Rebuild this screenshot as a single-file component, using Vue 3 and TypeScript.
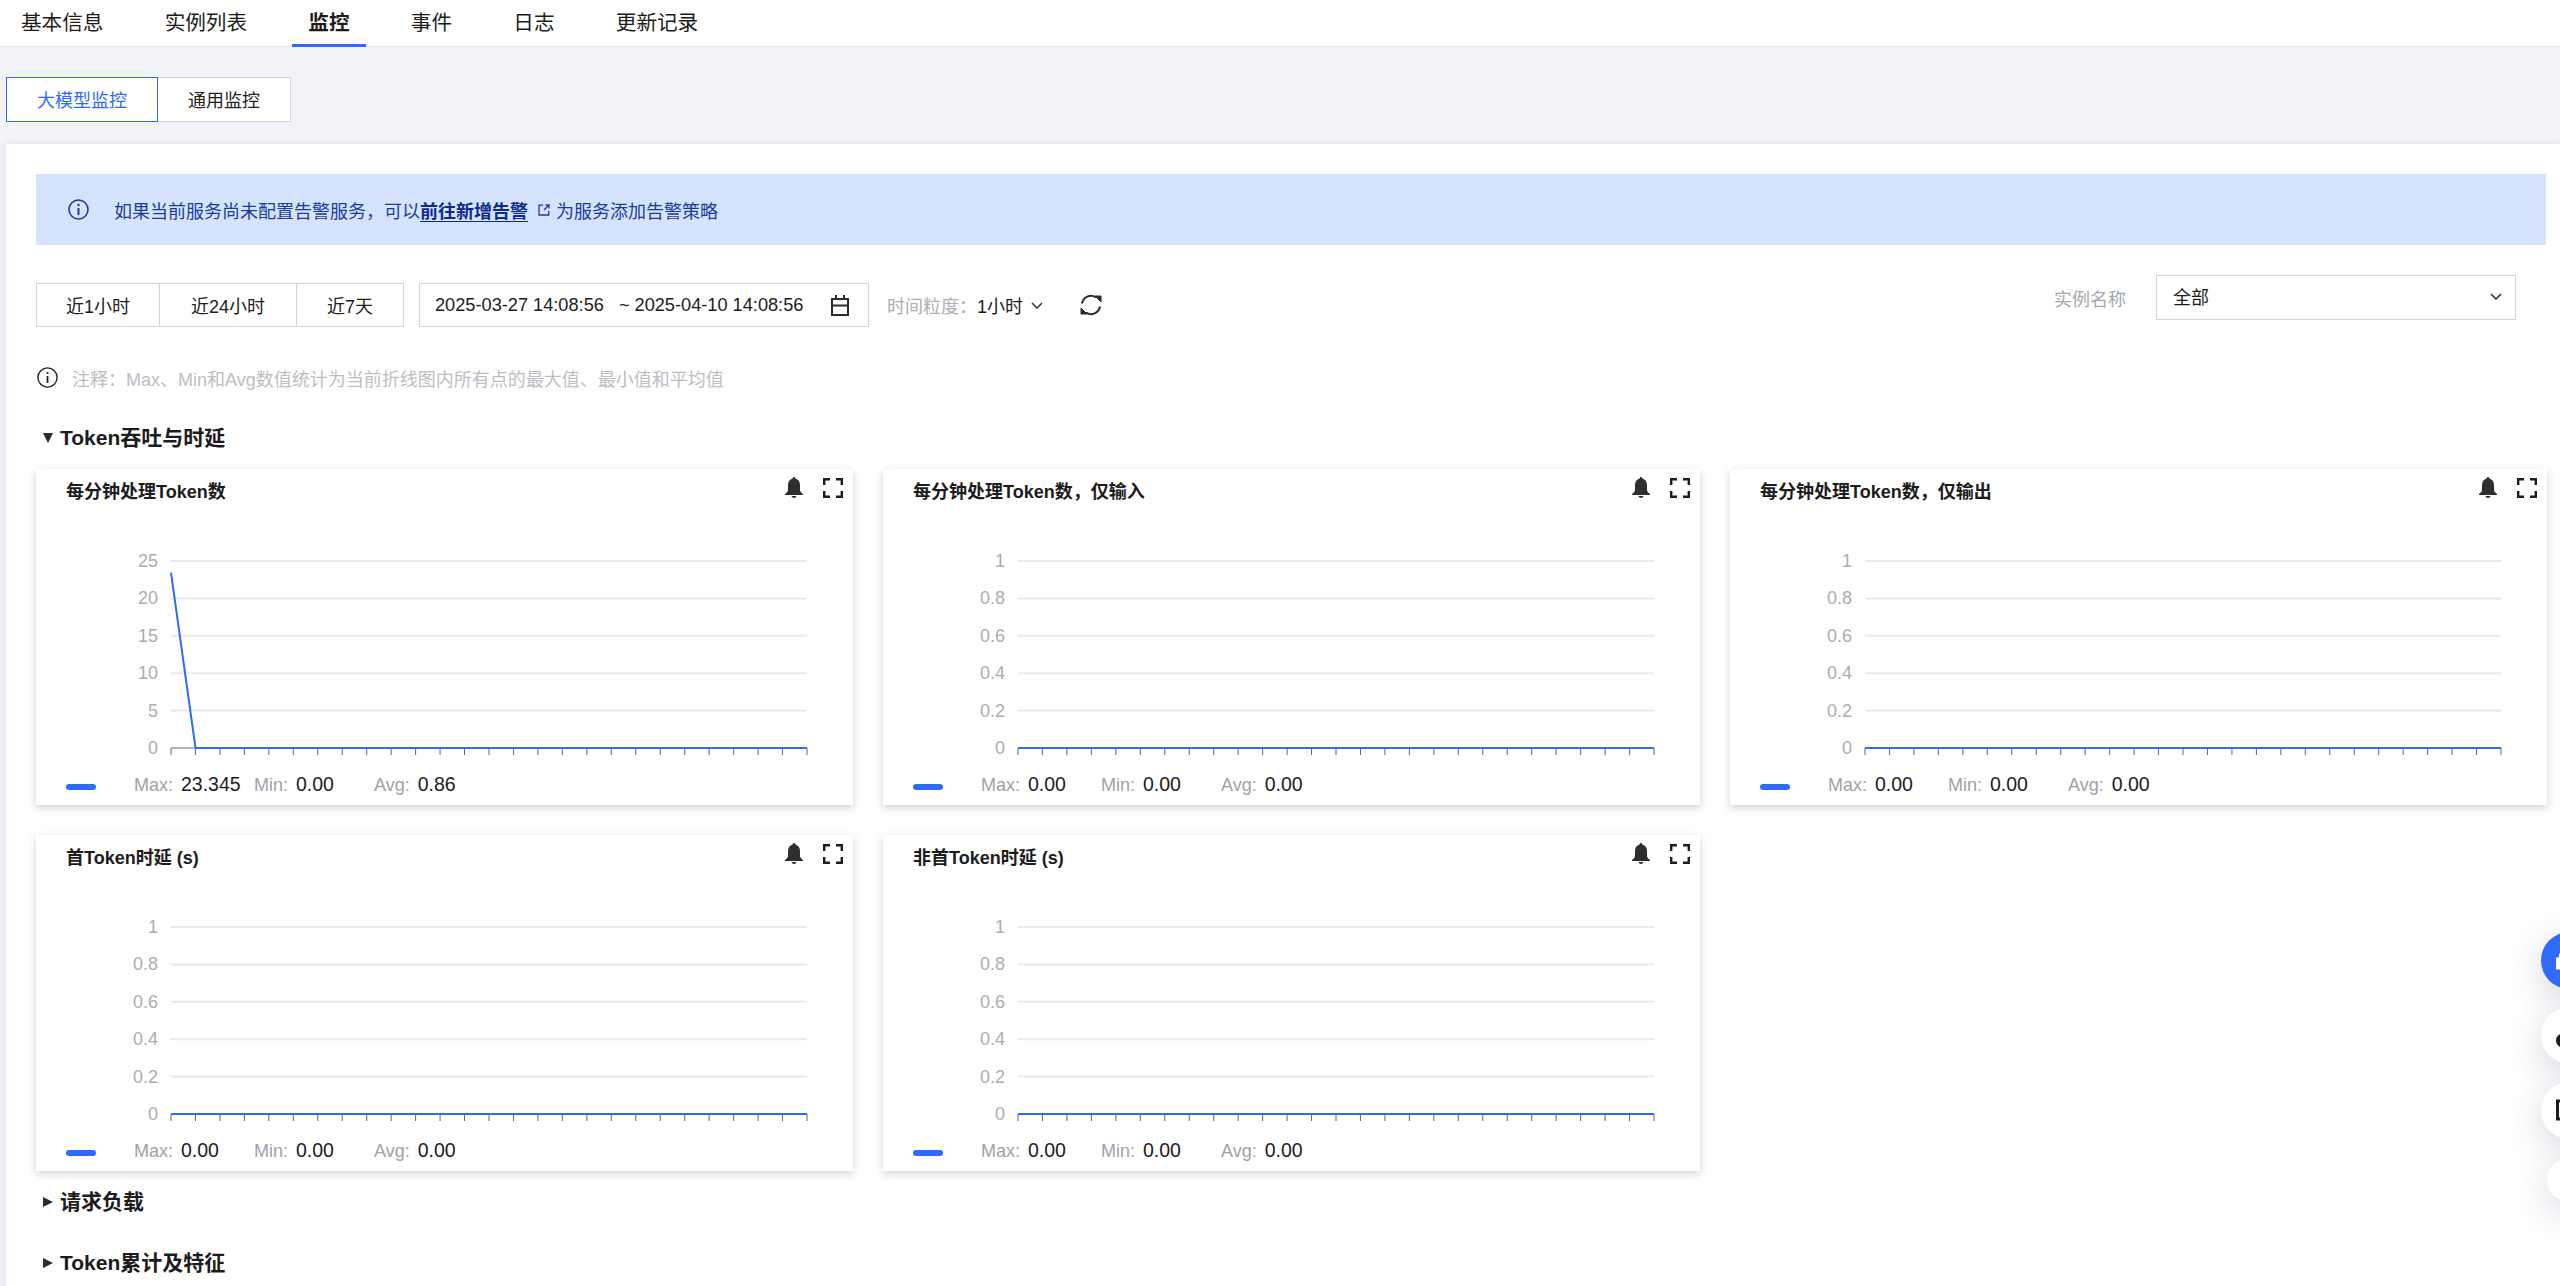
<template>
  <div class="page">
    <nav class="tabs">
      <a v-for="tab in tabs" :key="tab" class="tab" :class="{ active: tab === '监控' }">{{ tab }}</a>
    </nav>

    <div class="sub-tabs">
      <button class="sub-tab active">大模型监控</button>
      <button class="sub-tab">通用监控</button>
    </div>

    <main class="panel">
      <div class="alert">
        <svg class="info" viewBox="0 0 21 21" fill="none" stroke="currentColor" stroke-width="1.6">
          <circle cx="10.5" cy="10.5" r="9.5" />
          <path d="M10.5 9v7" stroke-width="2" />
          <circle cx="10.5" cy="6" r="1.2" fill="currentColor" stroke="none" />
        </svg>
        <span>如果当前服务尚未配置告警服务，可以</span>
        <a class="alert-link">前往新增告警</a>
        <svg class="ext" viewBox="0 0 12 12" fill="none" stroke="currentColor" stroke-width="1.3">
          <path d="M5 1.2H1v9.8h9.8V7M6 6l5-5M7.5 1H11v3.5" />
        </svg>
        <span>为服务添加告警策略</span>
      </div>

      <div class="toolbar">
        <div class="toolbar-left">
          <div class="range-group">
            <button v-for="r in ranges" :key="r.label" class="range" :style="{ width: r.width + 'px' }">{{ r.label }}</button>
          </div>
          <div class="date-range">
            <span>2025-03-27 14:08:56</span>
            <span class="tilde">~</span>
            <span>2025-04-10 14:08:56</span>
            <svg class="calendar" viewBox="0 0 18 21" fill="none" stroke="#2b2b2b" stroke-width="2">
              <path d="M1 4h16v16H1zM1 10.500h16M5 0v4M13 0v4" />
            </svg>
          </div>
          <span class="grain-label">时间粒度：</span>
          <span class="grain-value">1小时</span>
          <svg class="chevron" viewBox="0 0 12 7" fill="none" stroke="#333" stroke-width="1.5">
            <path d="M1 1l5 5 5-5" />
          </svg>
          <svg class="refresh" viewBox="0 0 22 22" fill="none" stroke="#2b2b2b" stroke-width="2">
            <path d="M2 9.500A9 9 0 0 1 16 3.500M20 12.500A9 9 0 0 1 6 18.500" />
            <path d="M15 2h6v6zM1 14l6 6H1z" fill="#2b2b2b" stroke-width="1" />
          </svg>
        </div>
        <div class="filter">
          <span class="filter-label">实例名称</span>
          <div class="select">
            <span class="select-text">全部</span>
            <svg class="select-arrow" viewBox="0 0 12 7" fill="none" stroke="#333" stroke-width="1.6">
              <path d="M1 1l5 5 5-5" />
            </svg>
          </div>
        </div>
      </div>

      <div class="note">
        <svg class="note-icon" viewBox="0 0 21 21" fill="none" stroke="#222" stroke-width="1.4">
          <circle cx="10.5" cy="10.5" r="9.6" />
          <path d="M10.5 9v7" stroke-width="1.8" />
          <circle cx="10.5" cy="6" r="1.1" fill="#222" stroke="none" />
        </svg>
        <span>注释：Max、Min和Avg数值统计为当前折线图内所有点的最大值、最小值和平均值</span>
      </div>

      <h3 class="section first"><i class="tri down"></i>Token吞吐与时延</h3>

      <div class="cards">
        <section v-for="card in cards" :key="card.title" class="card">
          <header class="card-head">
            <span class="card-title">{{ card.title }}</span>
            <svg class="bell" viewBox="0 0 18 21" fill="#2e2e2e">
              <path d="M9 0c.8 0 1.3.6 1.4 1.5C13.300 2.300 15 4.800 15 8v5c0 1.500 1.200 2.600 3 4v1H0v-1c1.800-1.400 3-2.500 3-4V8c0-3.200 1.700-5.700 4.600-6.500C7.700.6 8.200 0 9 0zM6.500 19h5c-.3 1.200-1.300 2-2.500 2s-2.200-.8-2.500-2z" />
            </svg>
            <svg class="expand" viewBox="0 0 20 20" fill="none" stroke="#1e1e1e" stroke-width="2.4">
              <path d="M7 1.200H1.200V7M13 1.200h5.800V7M7 18.800H1.200V13M13 18.800h5.800V13" />
            </svg>
          </header>

          <svg class="chart" width="817" height="234">
            <g v-for="(label, i) in card.yLabels" :key="label">
              <line v-if="i < 5" x1="135" x2="771" :y1="gridY(i)" :y2="gridY(i)" stroke="#e7eaf0" stroke-width="2" />
              <text x="122" :y="gridY(i) + 6" text-anchor="end" class="y-label">{{ label }}</text>
            </g>
            <line x1="135" x2="771" y1="219" y2="219" stroke="#666" />
            <line v-for="x in ticks" :key="x" :x1="x" :x2="x" y1="219" y2="226" stroke="#666" />
            <polyline :points="card.points" fill="none" stroke="#2f6bf6" stroke-width="2" />
          </svg>

          <footer class="legend">
            <i class="pill"></i>
            <div v-for="stat in card.stats" :key="stat.name" class="stat">
              <span class="stat-name">{{ stat.name }}:</span>
              <span class="stat-value">{{ stat.value }}</span>
            </div>
          </footer>
        </section>
      </div>

      <h3 class="section second"><i class="tri right"></i>请求负载</h3>
      <h3 class="section third"><i class="tri right"></i>Token累计及特征</h3>
    </main>

    <aside class="float">
      <div class="fab blue">
        <svg viewBox="0 0 24 24" fill="#fff"><path d="M0 8.500h3V4.500h21v16H0z" /></svg>
      </div>
      <div class="fab">
        <svg viewBox="0 0 24 24" fill="#1c1c1c"><circle cx="7" cy="16.500" r="7" /></svg>
      </div>
      <div class="fab">
        <svg viewBox="0 0 24 24" fill="none" stroke="#1c1c1c" stroke-width="3"><path d="M24 2H1.500v18H24" /></svg>
      </div>
      <div class="fab small"></div>
    </aside>
  </div>
</template>

<script setup lang="ts">
const tabs = ['基本信息', '实例列表', '监控', '事件', '日志', '更新记录']

const ranges = [
  { label: '近1小时', width: 123 },
  { label: '近24小时', width: 137 },
  { label: '近7天', width: 106 },
]

const gridY = (i: number) => 32 + i * 37.4

const ticks = Array.from({ length: 27 }, (_, i) => 135 + (i * 636) / 26)

const ratio = ['1', '0.8', '0.6', '0.4', '0.2', '0']
const flat = '135,219 771,219'

const zeroStats = [
  { name: 'Max', value: '0.00' },
  { name: 'Min', value: '0.00' },
  { name: 'Avg', value: '0.00' },
]

const cards = [
  {
    title: '每分钟处理Token数',
    yLabels: ['25', '20', '15', '10', '5', '0'],
    points: '135,43.700 159.500,219 771,219',
    stats: [
      { name: 'Max', value: '23.345' },
      { name: 'Min', value: '0.00' },
      { name: 'Avg', value: '0.86' },
    ],
  },
  { title: '每分钟处理Token数，仅输入', yLabels: ratio, points: flat, stats: zeroStats },
  { title: '每分钟处理Token数，仅输出', yLabels: ratio, points: flat, stats: zeroStats },
  { title: '首Token时延 (s)', yLabels: ratio, points: flat, stats: zeroStats },
  { title: '非首Token时延 (s)', yLabels: ratio, points: flat, stats: zeroStats },
]
</script>

<style>
html,
body {
  margin: 0;
  height: 100%;
  overflow: hidden;
  background: #f2f3f8;
}
</style>

<style scoped>
.page {
  position: relative;
  height: 1286px;
  overflow: hidden;
  font-family: "Liberation Sans", "Noto Sans CJK SC", sans-serif;
  font-size: 18px;
  color: #1c1c1c;
}

.tabs {
  display: flex;
  gap: 29.3px;
  height: 46px;
  padding-left: 5px;
  background: #fff;
  border-bottom: 1px solid #e6e8ee;
}
.tab {
  padding: 0 16px;
  height: 47px;
  box-sizing: border-box;
  line-height: 46px;
  font-size: 20.6px;
  white-space: nowrap;
}
.tab.active {
  font-weight: 700;
  border-bottom: 3px solid #2f6bf6;
}

.sub-tabs {
  display: flex;
  margin: 30px 0 22px 6px;
}
.sub-tab {
  height: 45px;
  width: 133px;
  padding: 0 0 2px;
  font: inherit;
  color: #222;
  background: #fff;
  border: 1px solid #cfd4de;
  border-left: 0;
}
.sub-tab.active {
  width: 152px;
  color: #2f6bf6;
  border: 1px solid #2f6bf6;
}

.panel {
  margin-left: 6px;
  padding: 30px 14px 0 30px;
  height: 1142px;
  box-sizing: border-box;
  background: #fff;
  box-shadow: 0 0 6px rgba(40, 50, 80, 0.1);
}

.alert {
  display: flex;
  align-items: center;
  height: 71px;
  padding-left: 32px;
  background: #d5e4fc;
  color: #1c3a9c;
}
.info {
  width: 21px;
  height: 21px;
  margin-right: 25px;
}
.alert-link {
  font-weight: 700;
  color: #0f2a8c;
  text-decoration: underline;
  text-underline-offset: 3px;
}
.ext {
  width: 12px;
  height: 12px;
  margin: 0 6px 0 10px;
}

.toolbar {
  display: flex;
  justify-content: space-between;
  margin-top: 30px;
  height: 52px;
}
.toolbar-left {
  display: flex;
  align-items: center;
  height: 44px;
  margin-top: 8px;
}
.range-group {
  display: flex;
  height: 44px;
  box-sizing: border-box;
  border: 1px solid #cfd4de;
}
.range {
  padding: 0;
  font: inherit;
  color: #222;
  background: #fff;
  border: 0;
  border-right: 1px solid #cfd4de;
}
.range:last-child {
  border-right: 0;
}
.date-range {
  display: flex;
  align-items: center;
  width: 450px;
  height: 44px;
  margin-left: 15px;
  padding-left: 15px;
  box-sizing: border-box;
  border: 1px solid #cfd4de;
  font-size: 18.2px;
  white-space: nowrap;
}
.tilde {
  margin: 0 5px 0 15px;
}
.calendar {
  width: 18px;
  height: 21px;
  margin-left: 28px;
}
.grain-label {
  margin-left: 18px;
  width: 90px;
  color: #aaadb3;
  white-space: nowrap;
}
.grain-value {
  white-space: nowrap;
}
.chevron {
  width: 12px;
  height: 7px;
  margin-left: 8px;
}
.refresh {
  width: 22px;
  height: 22px;
  margin-left: 37px;
}

.filter {
  display: flex;
  align-items: center;
  gap: 30px;
  height: 45px;
  margin-right: 30px;
}
.filter-label {
  color: #a6a8ad;
}
.select {
  display: flex;
  align-items: center;
  justify-content: space-between;
  width: 360px;
  height: 45px;
  padding: 0 13px 0 16px;
  box-sizing: border-box;
  border: 1px solid #cfd4de;
}
.select-text {
  margin-bottom: 3px;
}
.select-arrow {
  width: 12px;
  height: 7px;
  margin-bottom: 2px;
}

.note {
  display: flex;
  align-items: center;
  gap: 14px;
  height: 21px;
  margin-top: 40px;
  padding-left: 1px;
  color: #bcbec3;
}
.note-icon {
  width: 21px;
  height: 21px;
}

.section {
  display: flex;
  align-items: center;
  height: 28px;
  margin: 0;
  font-size: 21px;
  font-weight: 700;
  line-height: 28px;
  color: #1c1c1c;
}
.section.first {
  margin-top: 36px;
}
.section.second {
  margin-top: 17px;
}
.section.third {
  margin-top: 33px;
}
.tri {
  width: 0;
  height: 0;
  margin: 0 7px 0 7px;
  border-style: solid;
  border-color: transparent;
}
.tri.down {
  border-width: 10px 5px 0;
  border-top-color: #2b2b2b;
}
.tri.right {
  border-width: 5.5px 0 5.500px 10px;
  border-left-color: #2b2b2b;
  margin-right: 7px;
}

.cards {
  display: grid;
  grid-template-columns: repeat(3, 1fr);
  gap: 30px;
  margin-top: 17px;
}
.card {
  height: 336px;
  background: #fff;
  box-shadow: 0 3px 8px rgba(40, 50, 80, 0.22);
}
.card-head {
  display: flex;
  align-items: flex-start;
  height: 60px;
  padding: 8px 10px 0 30px;
  box-sizing: border-box;
}
.card-title {
  flex: 1;
  margin-top: 2px;
  font-size: 18px;
  font-weight: 700;
  line-height: 26px;
}
.bell {
  width: 18px;
  height: 21px;
}
.expand {
  width: 20px;
  height: 20px;
  margin-left: 20px;
  margin-top: 1px;
}
.chart {
  display: block;
  overflow: visible;
}
.y-label {
  font-size: 18px;
  fill: #aaadb3;
}
.legend {
  display: flex;
  align-items: center;
  height: 42px;
  padding-left: 30px;
}
.pill {
  width: 30px;
  height: 6px;
  margin: 6px 38px 0 0;
  border-radius: 3px;
  background: #2f6bf6;
}
.stat {
  width: 120px;
  white-space: nowrap;
}
.stat-name {
  margin-right: 8px;
  color: #a0a2a8;
}
.stat-value {
  font-size: 19.5px;
}

.float {
  position: absolute;
  top: 932px;
  left: 2541px;
  display: flex;
  flex-direction: column;
  gap: 18px;
}
.fab {
  display: flex;
  align-items: center;
  width: 57px;
  height: 57px;
  padding-left: 15px;
  box-sizing: border-box;
  border-radius: 50%;
  background: #fff;
  box-shadow: 0 10px 36px rgba(40, 50, 90, 0.2);
}
.fab svg {
  width: 24px;
  height: 24px;
  flex: none;
}
.fab.blue {
  background: #2f6bf6;
}
.fab.small {
  width: 44px;
  height: 44px;
  margin: 1px 0 0 6px;
}
</style>
